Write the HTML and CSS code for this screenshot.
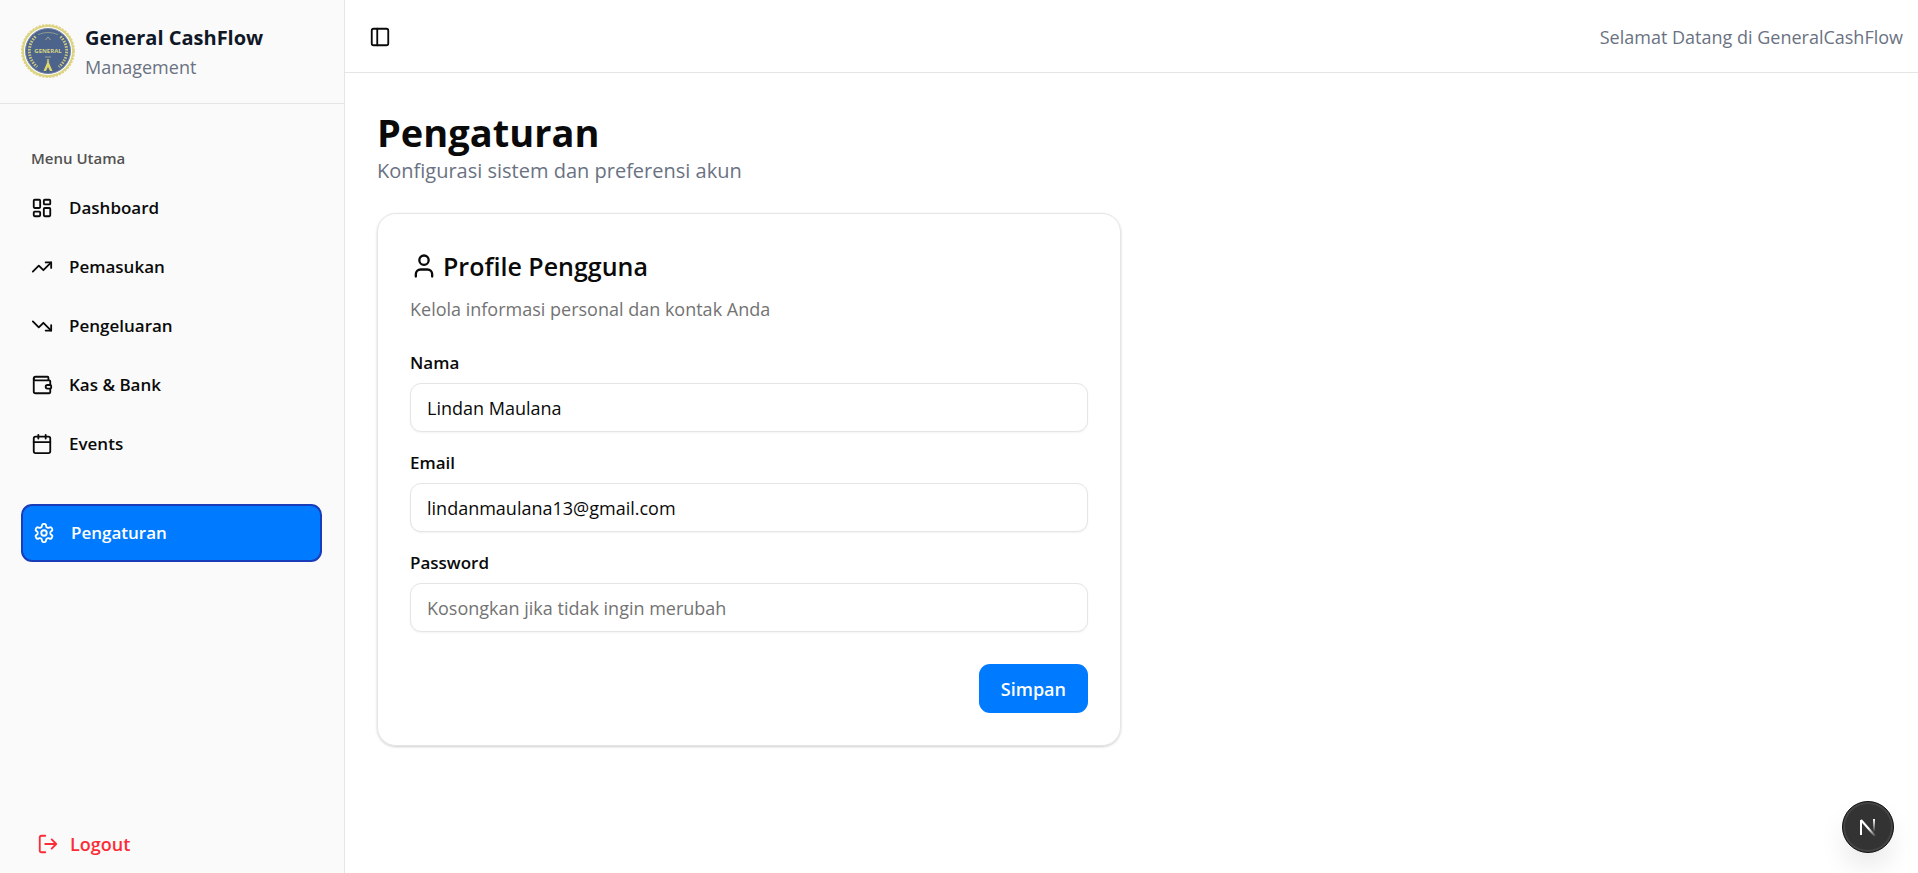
FILE: index.html
```html
<!DOCTYPE html>
<html lang="id">
<head>
<meta charset="utf-8">
<meta name="viewport" content="width=device-width, initial-scale=1">
<title>General CashFlow</title>
<link rel="stylesheet" href="styles.css">
</head>
<body>
<div class="app">
  <aside class="sidebar">
    <div class="brand">
      <svg class="brand-logo" viewBox="0 0 54 54" aria-hidden="true">
        <circle cx="27" cy="27" r="25" fill="#fff" stroke="#ddd483" stroke-width="2"/>
        <circle cx="27" cy="27" r="26" fill="none" stroke="#ddd483" stroke-width="2" stroke-dasharray="2.2 1.2"/>
        <circle cx="27" cy="27" r="22.5" fill="#4c638c"/>
        <circle cx="27" cy="27" r="22.5" fill="none" stroke="#7184a3" stroke-width="1"/>
        <path d="M14.500 12.500C6 21 6 34 16 43M39.500 12.500C48 21 48 34 38 43" fill="none" stroke="#c9c583" stroke-width="3" stroke-dasharray="1.600 1.200"/>
        <path d="M17 10.500q10-4 20 0" fill="none" stroke="#8d9a8d" stroke-width="1"/>
        <path d="m24.500 16 2.500-3 2.500 3M24 33h6" fill="none" stroke="#9da58c" stroke-width="1"/>
        <path d="M27 36.500 31.500 47H29l-2-4-2 4h-2.500z" fill="#ddd66f"/>
        <path d="m26 35 2 3m0-3-2 3" stroke="#ddd66f" stroke-width=".8"/>
        <text class="brand-logo-text" x="27" y="29" text-anchor="middle">GENERAL</text>
      </svg>
      <div class="brand-name">
        <span class="brand-title">General CashFlow</span>
        <span class="brand-subtitle">Management</span>
      </div>
    </div>
    <nav class="menu" aria-label="Menu Utama">
      <div class="menu-label">Menu Utama</div>
      <a class="menu-item" href="#dashboard">
        <svg class="icon" viewBox="0 0 24 24"><rect width="7" height="9" x="3" y="3" rx="1"/><rect width="7" height="5" x="14" y="3" rx="1"/><rect width="7" height="9" x="14" y="12" rx="1"/><rect width="7" height="5" x="3" y="16" rx="1"/></svg>
        <span>Dashboard</span>
      </a>
      <a class="menu-item" href="#pemasukan">
        <svg class="icon" viewBox="0 0 24 24"><path d="M16 7h6v6"/><path d="m22 7-8.500 8.500-5-5L2 17"/></svg>
        <span>Pemasukan</span>
      </a>
      <a class="menu-item" href="#pengeluaran">
        <svg class="icon" viewBox="0 0 24 24"><path d="M16 17h6v-6"/><path d="m22 17-8.500-8.500-5 5L2 7"/></svg>
        <span>Pengeluaran</span>
      </a>
      <a class="menu-item" href="#kas">
        <svg class="icon" viewBox="0 0 24 24"><path d="M19 7V4a1 1 0 0 0-1-1H5a2 2 0 0 0 0 4h15a1 1 0 0 1 1 1v4h-3a2 2 0 0 0 0 4h3a1 1 0 0 0 1-1v-2a1 1 0 0 0-1-1"/><path d="M3 5v14a2 2 0 0 0 2 2h15a1 1 0 0 0 1-1v-4"/></svg>
        <span>Kas &amp; Bank</span>
      </a>
      <a class="menu-item" href="#events">
        <svg class="icon" viewBox="0 0 24 24"><path d="M8 2v4M16 2v4"/><rect width="18" height="18" x="3" y="4" rx="2"/><path d="M3 10h18"/></svg>
        <span>Events</span>
      </a>
      <a class="menu-item menu-item-active" href="#pengaturan" aria-current="page">
        <svg class="icon" viewBox="0 0 24 24"><path d="M12.220 2h-.44a2 2 0 0 0-2 2v.18a2 2 0 0 1-1 1.730l-.43.25a2 2 0 0 1-2 0l-.15-.08a2 2 0 0 0-2.730.73l-.22.38a2 2 0 0 0 .73 2.730l.15.1a2 2 0 0 1 1 1.720v.51a2 2 0 0 1-1 1.740l-.15.09a2 2 0 0 0-.73 2.730l.22.38a2 2 0 0 0 2.730.73l.15-.08a2 2 0 0 1 2 0l.43.25a2 2 0 0 1 1 1.730V20a2 2 0 0 0 2 2h.44a2 2 0 0 0 2-2v-.18a2 2 0 0 1 1-1.730l.43-.25a2 2 0 0 1 2 0l.15.08a2 2 0 0 0 2.730-.73l.22-.39a2 2 0 0 0-.73-2.730l-.15-.08a2 2 0 0 1-1-1.740v-.5a2 2 0 0 1 1-1.740l.15-.09a2 2 0 0 0 .73-2.730l-.22-.38a2 2 0 0 0-2.730-.73l-.15.08a2 2 0 0 1-2 0l-.43-.25a2 2 0 0 1-1-1.730V4a2 2 0 0 0-2-2z"/><circle cx="12" cy="12" r="3"/></svg>
        <span>Pengaturan</span>
      </a>
    </nav>
    <button class="logout" type="button">
      <svg class="icon" viewBox="0 0 24 24"><path d="m16 17 5-5-5-5M21 12H9M9 21H5a2 2 0 0 1-2-2V5a2 2 0 0 1 2-2h4"/></svg>
      <span>Logout</span>
    </button>
  </aside>
  <div class="page">
    <header class="topbar">
      <button class="toggle" type="button" aria-label="Toggle Sidebar">
        <svg class="icon" viewBox="0 0 24 24"><rect width="18" height="18" x="3" y="3" rx="2"/><path d="M9 3v18"/></svg>
      </button>
      <span class="welcome">Selamat Datang di GeneralCashFlow</span>
    </header>
    <main class="content">
      <h1 class="title">Pengaturan</h1>
      <p class="subtitle">Konfigurasi sistem dan preferensi akun</p>
      <section class="card">
        <h2 class="card-title">
          <svg class="icon icon-large" viewBox="0 0 24 24"><path d="M19 21v-2a4 4 0 0 0-4-4H9a4 4 0 0 0-4 4v2"/><circle cx="12" cy="7" r="4"/></svg>
          <span>Profile Pengguna</span>
        </h2>
        <p class="card-description">Kelola informasi personal dan kontak Anda</p>
        <form class="form">
          <div class="field">
            <label class="label" for="name">Nama</label>
            <input class="input" id="name" type="text" value="Lindan Maulana">
          </div>
          <div class="field">
            <label class="label" for="email">Email</label>
            <input class="input" id="email" type="email" value="lindanmaulana13@gmail.com">
          </div>
          <div class="field">
            <label class="label" for="password">Password</label>
            <input class="input" id="password" type="password" placeholder="Kosongkan jika tidak ingin merubah">
          </div>
          <button class="submit" type="button">Simpan</button>
        </form>
      </section>
    </main>
  </div>
</div>
<button class="dev-badge" type="button" aria-label="Next.js Dev Tools">
  <svg class="dev-badge-mark" viewBox="0 0 20 20" aria-hidden="true">
    <defs>
      <linearGradient id="diagonal" gradientUnits="userSpaceOnUse" x1="11" y1="11" x2="17" y2="19"><stop stop-color="#fff"/><stop offset="1" stop-color="#fff" stop-opacity=".1"/></linearGradient>
      <linearGradient id="upright" gradientUnits="userSpaceOnUse" x1="15" y1="2" x2="15" y2="15"><stop stop-color="#fff"/><stop offset="1" stop-color="#fff" stop-opacity="0"/></linearGradient>
    </defs>
    <path d="M3 18V3" stroke="#fff" stroke-width="2"/>
    <path d="m3 3 14 16" stroke="url(#diagonal)" stroke-width="2"/>
    <path d="M16 2v13" stroke="url(#upright)" stroke-width="2"/>
  </svg>
</button>
</body>
</html>
```
FILE: styles.css
```css
* {
  box-sizing: border-box;
}

body {
  margin: 0;
  background: #fff;
  color: #0a0a0a;
  font-family: "Segoe UI", "Open Sans", "Noto Sans", sans-serif;
  font-size: 18px;
  line-height: 28px;
}

h1, h2, p {
  margin: 0;
}

button, input {
  font: inherit;
}

.app {
  display: flex;
  min-height: 100vh;
}

.icon {
  flex: none;
  width: 22px;
  height: 22px;
  fill: none;
  stroke: currentColor;
  stroke-width: 2;
  stroke-linecap: round;
  stroke-linejoin: round;
}

.icon-large {
  width: 28px;
  height: 28px;
}

.sidebar {
  display: flex;
  flex: none;
  flex-direction: column;
  width: 345px;
  background: #fafafa;
  border-right: 1px solid #e5e5e5;
}

.brand {
  display: flex;
  align-items: center;
  gap: 10px;
  height: 104px;
  padding: 0 21px 1px;
  border-bottom: 1px solid #e5e5e5;
}

.brand-logo {
  flex: none;
  width: 54px;
  height: 54px;
}

.brand-logo-text {
  font-size: 6px;
  font-weight: 700;
  fill: #d6d383;
}

.brand-name {
  display: flex;
  flex-direction: column;
  padding-top: 2px;
}

.brand-title {
  color: #101828;
  font-size: 20px;
  font-weight: 700;
  line-height: 30px;
}

.brand-subtitle {
  color: #6a7282;
}

.menu {
  display: flex;
  flex: 1;
  flex-direction: column;
  padding: 32px 22px 0 21px;
}

.menu-label {
  height: 44px;
  padding: 0 10px;
  color: #525252;
  font-size: 15px;
  font-weight: 600;
  line-height: 44px;
}

.menu-item {
  display: flex;
  align-items: center;
  gap: 16px;
  height: 55px;
  margin-bottom: 4px;
  padding: 0 10px;
  color: inherit;
  font-size: 17px;
  font-weight: 600;
  text-decoration: none;
}

.menu-item-active {
  height: 58px;
  margin-top: 29px;
  border: 2px solid #193cb8;
  border-radius: 11px;
  background: #007bff;
  color: #fff;
}

.logout {
  display: flex;
  align-items: center;
  align-self: flex-start;
  gap: 11px;
  margin: 0 0 7px 21px;
  padding: 8px 16px;
  border: 0;
  background: none;
  color: #fb2c36;
  font-weight: 600;
}

.page {
  flex: 1;
  min-width: 0;
}

.topbar {
  display: flex;
  align-items: center;
  justify-content: space-between;
  height: 73px;
  padding: 1px 15px 0 16px;
  border-bottom: 1px solid #e5e5e5;
}

.toggle {
  display: flex;
  align-items: center;
  justify-content: center;
  width: 38px;
  height: 38px;
  padding: 0;
  border: 0;
  background: none;
  color: inherit;
}

.welcome {
  color: #6a7282;
}

.content {
  padding: 35px 32px;
}

.title {
  font-size: 38px;
  font-weight: 700;
  line-height: 48px;
}

.subtitle {
  color: #6a7282;
  font-size: 20px;
  line-height: 30px;
}

.card {
  max-width: 744px;
  margin-top: 27px;
  padding: 32px;
  border: 1px solid #e5e5e5;
  border-radius: 19px;
  box-shadow: 0 1px 3px rgba(0, 0, 0, 0.1), 0 1px 2px rgba(0, 0, 0, 0.1);
}

.card-title {
  display: flex;
  align-items: center;
  gap: 5px;
  font-size: 25px;
  font-weight: 600;
  line-height: 40px;
}

.card-description {
  margin-top: 9px;
  color: #737373;
}

.form {
  display: flex;
  flex-direction: column;
  gap: 16px;
  margin-top: 26px;
}

.field {
  display: flex;
  flex-direction: column;
  gap: 6px;
}

.field + .field {
  padding-top: 1px;
}

.label {
  font-size: 17px;
  font-weight: 600;
}

.input {
  width: 100%;
  height: 49px;
  padding: 0 16px;
  border: 1px solid #e5e5e5;
  border-radius: 11px;
  background: #fff;
  color: inherit;
  box-shadow: 0 1px 2px rgba(0, 0, 0, 0.05);
}

.input::placeholder {
  color: #737373;
  opacity: 1;
}

.submit {
  align-self: flex-end;
  height: 49px;
  margin-top: 16px;
  padding: 0 22px;
  border: 0;
  border-radius: 11px;
  background: #007bff;
  color: #fff;
  font-weight: 600;
}

.dev-badge {
  position: fixed;
  right: 24px;
  bottom: 20px;
  display: flex;
  align-items: center;
  justify-content: center;
  width: 52px;
  height: 52px;
  padding: 0;
  border: 1px solid #111;
  border-radius: 50%;
  background: #333;
  box-shadow: inset 0 0 0 2px #444, 0 16px 32px -8px rgba(0, 0, 0, 0.16);
}

.dev-badge-mark {
  width: 20px;
  height: 20px;
  fill: none;
}
```
